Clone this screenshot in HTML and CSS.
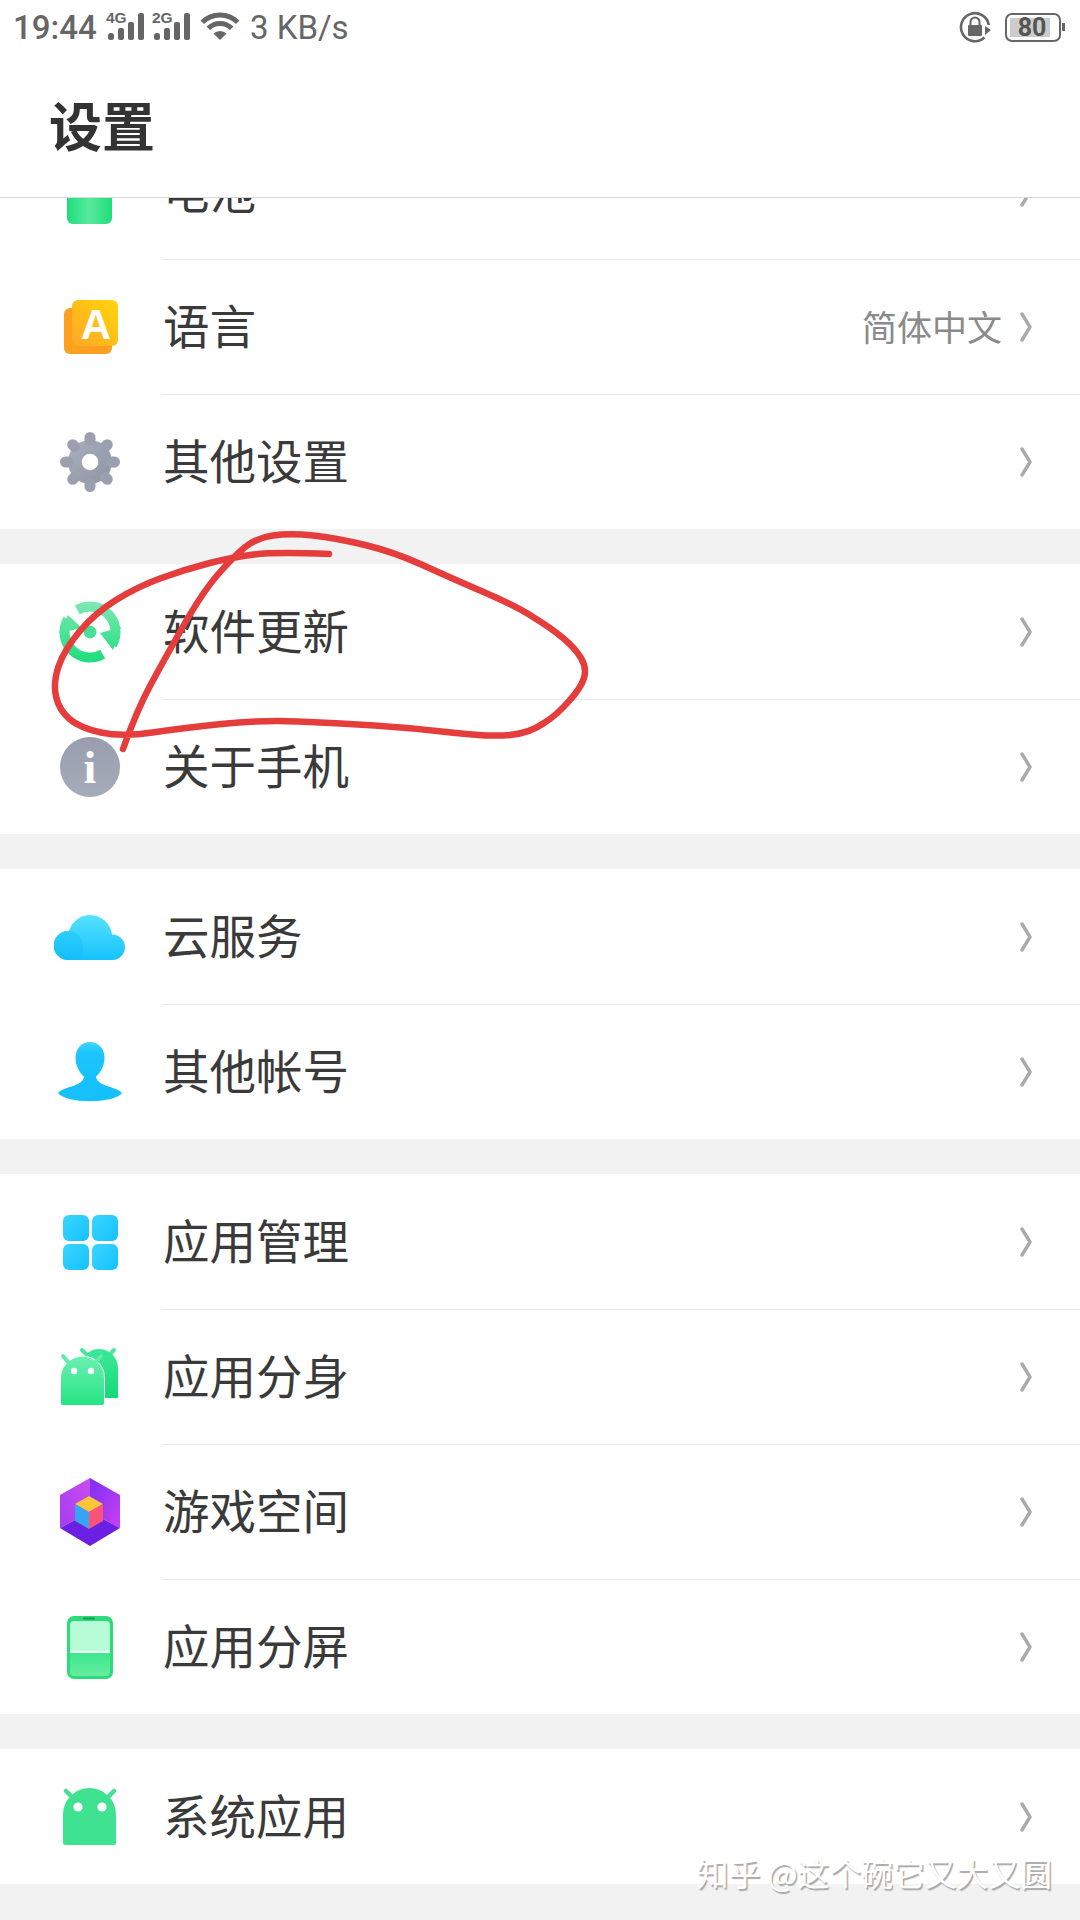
FILE: index.html
```html
<!DOCTYPE html>
<html lang="zh-CN">
<head>
    <meta charset="UTF-8">
    <meta name="viewport" content="width=device-width, initial-scale=1">
    <link rel="stylesheet" href="styles.css">
</head>
<body>

<div class="screen">

    <div class="status-bar">
        <span class="clock">19:44</span>
        <svg class="signal" viewBox="0 0 40 40">
            <text x="0" y="16" class="signal-type">4G</text>
            <rect x="2" y="26" width="6" height="7" rx="2.5"/>
            <rect x="12" y="21" width="6" height="12" rx="2"/>
            <rect x="22" y="15" width="6" height="18" rx="2"/>
            <rect x="32" y="6" width="6" height="27" rx="2"/>
        </svg>
        <svg class="signal" viewBox="0 0 40 40">
            <text x="0" y="16" class="signal-type">2G</text>
            <rect x="2" y="26" width="6" height="7" rx="2.5"/>
            <rect x="12" y="21" width="6" height="12" rx="2"/>
            <rect x="22" y="15" width="6" height="18" rx="2"/>
            <rect x="32" y="6" width="6" height="27" rx="2"/>
        </svg>
        <svg class="wifi" viewBox="0 0 40 30">
            <path d="M2.3 10.3 A25 25 0 0 1 37.7 10.3" fill="none" stroke="#666" stroke-width="5"/>
            <path d="M8.3 16.3 A16.5 16.5 0 0 1 31.7 16.3" fill="none" stroke="#666" stroke-width="5"/>
            <path d="M20 28 L13.5 21.5 A9.5 9.5 0 0 1 26.5 21.5 Z" fill="#666"/>
        </svg>
        <span class="net-speed">3 KB/s</span>
        <span class="status-spacer"></span>
        <svg class="rotate-lock" viewBox="0 0 32 32">
            <path d="M25.5 26.5 A14 14 0 1 1 29.8 14" fill="none" stroke="#666" stroke-width="2.6"/>
            <path d="M26 15 L32 19 L26 24 Z" fill="#666"/>
            <rect x="9" y="14" width="14" height="11" rx="1" fill="#666"/>
            <path d="M11.5 14 V11 A4.5 4.5 0 0 1 20.5 11 V14" fill="none" stroke="#666" stroke-width="2"/>
        </svg>
        <div class="battery">
            <div class="battery-body"><span class="battery-level">80</span></div>
            <div class="battery-nub"></div>
        </div>
    </div>

    <div class="page-header">
        <h1 class="page-title">设置</h1>
    </div>

    <div class="settings-list">

        <div class="group">
            <div class="row">
                <svg class="row-icon" viewBox="0 0 72 72">
                    <defs><linearGradient id="battG" x1="0" x2="1" y1="0" y2="0"><stop offset="0" stop-color="#1edd7c"/><stop offset=".5" stop-color="#58ea9d"/><stop offset="1" stop-color="#1edd7c"/></linearGradient></defs>
                    <rect x="13" y="5" width="45" height="63" rx="6" fill="url(#battG)"/>
                </svg>
                <span class="row-label">电池</span>
                <svg class="chevron" viewBox="0 0 12 30"><path d="M2 2 L10 15 L2 28"/></svg>
            </div>
            <div class="row">
                <svg class="row-icon" viewBox="0 0 72 72">
                    <defs><linearGradient id="langG" x1="1" x2="0" y1="0" y2="1"><stop offset="0" stop-color="#ffd60a"/><stop offset="1" stop-color="#ffa726"/></linearGradient></defs>
                    <rect x="10" y="17" width="48" height="46" rx="6" fill="#ff9f1f"/>
                    <rect x="18" y="9" width="46" height="46" rx="6" fill="url(#langG)"/>
                    <text x="42" y="48" class="lang-letter">A</text>
                </svg>
                <span class="row-label">语言</span>
                <span class="row-value">简体中文</span>
                <svg class="chevron" viewBox="0 0 12 30"><path d="M2 2 L10 15 L2 28"/></svg>
            </div>
            <div class="row">
                <svg class="row-icon" viewBox="0 0 72 72">
                    <defs><linearGradient id="gearG" x1="0" x2="1" y1="0" y2="1"><stop offset="0" stop-color="#aab0bd"/><stop offset="1" stop-color="#8d93a3"/></linearGradient></defs>
                    <circle cx="36" cy="36" r="22" fill="url(#gearG)"/>
                    <g stroke="#9aa0af" stroke-width="11" stroke-linecap="round">
                        <path d="M36 14 V11.5"/>
                        <path d="M36 58 V60.5"/>
                        <path d="M14 36 H11.5"/>
                        <path d="M58 36 H60.5"/>
                        <path d="M20.5 20.5 L18.7 18.7"/>
                        <path d="M51.5 20.5 L53.3 18.7"/>
                        <path d="M20.5 51.5 L18.7 53.3"/>
                        <path d="M51.5 51.5 L53.3 53.3"/>
                    </g>
                    <circle cx="36" cy="36" r="8.3" fill="#fff"/>
                </svg>
                <span class="row-label">其他设置</span>
                <svg class="chevron" viewBox="0 0 12 30"><path d="M2 2 L10 15 L2 28"/></svg>
            </div>
        </div>

        <div class="group">
            <div class="row">
                <svg class="row-icon" viewBox="0 0 72 72">
                    <defs><linearGradient id="updG" gradientUnits="userSpaceOnUse" x1="0" x2="0" y1="6" y2="66"><stop offset="0" stop-color="#7ce9b2"/><stop offset="1" stop-color="#1edd7c"/></linearGradient></defs>
                    <path d="M23.25 13.9 A25.5 25.5 0 0 1 58.1 48.75" fill="none" stroke="url(#updG)" stroke-width="10"/>
                    <path d="M48.75 58.1 A25.5 25.5 0 0 1 13.9 23.25" fill="none" stroke="url(#updG)" stroke-width="10"/>
                    <polygon points="67,31 46,37 59,54" fill="url(#updG)"/>
                    <polygon points="5,37 28,32 14,19" fill="url(#updG)"/>
                    <circle cx="36" cy="36" r="6.5" fill="#45e097"/>
                </svg>
                <span class="row-label">软件更新</span>
                <svg class="chevron" viewBox="0 0 12 30"><path d="M2 2 L10 15 L2 28"/></svg>
            </div>
            <div class="row">
                <svg class="row-icon" viewBox="0 0 72 72">
                    <defs><linearGradient id="infoG" x1="0" x2="0" y1="0" y2="1"><stop offset="0" stop-color="#989eae"/><stop offset="1" stop-color="#a6abb9"/></linearGradient></defs>
                    <circle cx="36" cy="36" r="30" fill="url(#infoG)"/>
                    <text x="36" y="52" class="info-letter">i</text>
                </svg>
                <span class="row-label">关于手机</span>
                <svg class="chevron" viewBox="0 0 12 30"><path d="M2 2 L10 15 L2 28"/></svg>
            </div>
        </div>

        <div class="group">
            <div class="row">
                <svg class="row-icon" viewBox="0 0 72 72">
                    <defs>
                        <linearGradient id="cloudG" x1="0" x2="0" y1="0" y2="1"><stop offset="0" stop-color="#55e2ff"/><stop offset="1" stop-color="#16c2fd"/></linearGradient>
                        <linearGradient id="cloudL" x1="0" x2="0" y1="0" y2="1"><stop offset="0" stop-color="#2ccdfd"/><stop offset="1" stop-color="#14bffc"/></linearGradient>
                    </defs>
                    <path d="M14 59 A14.5 14.5 0 0 1 14 30 H15 A22 22 0 0 1 58 33.5 A12.7 12.7 0 0 1 58.5 59 Z" fill="url(#cloudG)"/>
                    <path d="M14.5 59 A14.5 14.5 0 1 1 29 44.5 V59 Z" fill="url(#cloudL)"/>
                </svg>
                <span class="row-label">云服务</span>
                <svg class="chevron" viewBox="0 0 12 30"><path d="M2 2 L10 15 L2 28"/></svg>
            </div>
            <div class="row">
                <svg class="row-icon" viewBox="0 0 72 72">
                    <defs><linearGradient id="userG" x1="0" x2="0" y1="0" y2="1"><stop offset="0" stop-color="#3fd6ff"/><stop offset=".3" stop-color="#1cc5fd"/><stop offset="1" stop-color="#16c0fb"/></linearGradient></defs>
                    <path d="M4 57 C10 50 28 51 30 41 L42 41 C44 51 62 50 68 57 C60 68 12 68 4 57 Z" fill="#16c0fb"/>
                    <path d="M36 6 C45 6 50.5 13 50.5 22 C50.5 32 43 43 36 43 C29 43 21.5 32 21.5 22 C21.5 13 27 6 36 6 Z" fill="url(#userG)"/>
                </svg>
                <span class="row-label">其他帐号</span>
                <svg class="chevron" viewBox="0 0 12 30"><path d="M2 2 L10 15 L2 28"/></svg>
            </div>
        </div>

        <div class="group">
            <div class="row">
                <svg class="row-icon" viewBox="0 0 72 72">
                    <defs><linearGradient id="appsG" x1="0" x2="1" y1="0" y2="1"><stop offset="0" stop-color="#3cd5ff"/><stop offset="1" stop-color="#14c2ff"/></linearGradient></defs>
                    <rect x="9" y="9" width="26" height="26" rx="6" fill="url(#appsG)"/>
                    <rect x="38" y="9" width="26" height="26" rx="6" fill="url(#appsG)"/>
                    <rect x="9" y="38" width="26" height="26" rx="6" fill="url(#appsG)"/>
                    <rect x="38" y="38" width="26" height="26" rx="6" fill="url(#appsG)"/>
                </svg>
                <span class="row-label">应用管理</span>
                <svg class="chevron" viewBox="0 0 12 30"><path d="M2 2 L10 15 L2 28"/></svg>
            </div>
            <div class="row">
                <svg class="row-icon" viewBox="0 0 72 72">
                    <defs>
                        <linearGradient id="droidBack" x1="0" x2="0" y1="0" y2="1"><stop offset="0" stop-color="#3ee79a"/><stop offset="1" stop-color="#12dc74"/></linearGradient>
                        <linearGradient id="droidFront" x1="0" x2="0" y1="0" y2="1"><stop offset="0" stop-color="#6cefb0"/><stop offset="1" stop-color="#26e484"/></linearGradient>
                    </defs>
                    <path d="M28 9 L32 13 M60 9 L56 13" stroke="#4ae89f" stroke-width="4" stroke-linecap="round"/>
                    <path d="M26 57 V27 A19 19 0 0 1 64 27 V57 Z" fill="url(#droidBack)"/>
                    <path d="M8 64 Q7 64 7 62 V37 A21.5 21.5 0 0 1 50 37 V62 Q50 64 48 64 Z" fill="#fff" stroke="#fff" stroke-width="2"/>
                    <path d="M9 15 L14 21 M47 15 L42 21" stroke="#5fecaa" stroke-width="4" stroke-linecap="round"/>
                    <path d="M9 64 Q7 64 7 62 V37 A21.5 21.5 0 0 1 50 37 V62 Q50 64 48 64 Z" fill="url(#droidFront)"/>
                    <circle cx="20" cy="30" r="3.2" fill="#fff"/>
                    <circle cx="37" cy="30" r="3.2" fill="#fff"/>
                </svg>
                <span class="row-label">应用分身</span>
                <svg class="chevron" viewBox="0 0 12 30"><path d="M2 2 L10 15 L2 28"/></svg>
            </div>
            <div class="row">
                <svg class="row-icon" viewBox="0 0 72 72">
                    <defs>
                        <linearGradient id="hexL" x1="1" x2="0" y1="0" y2="1"><stop offset="0" stop-color="#c94df2"/><stop offset="1" stop-color="#a53cf0"/></linearGradient>
                        <linearGradient id="hexR" x1="0" x2="1" y1="0" y2="1"><stop offset="0" stop-color="#7a2ff5"/><stop offset="1" stop-color="#cc3ff0"/></linearGradient>
                    </defs>
                    <polygon points="36,2 6,19 6,52 36,36" fill="url(#hexL)"/>
                    <polygon points="36,2 66,19 66,52 36,36" fill="url(#hexR)"/>
                    <polygon points="6,52 36,70 66,52 36,36" fill="#6a1fe3"/>
                    <polygon points="35,20 49,28 35,36 21,28" fill="#ffc53a"/>
                    <polygon points="21,28 35,36 35,53 21,45" fill="#36a5f5"/>
                    <polygon points="49,28 35,36 35,53 49,45" fill="#fb5478"/>
                </svg>
                <span class="row-label">游戏空间</span>
                <svg class="chevron" viewBox="0 0 12 30"><path d="M2 2 L10 15 L2 28"/></svg>
            </div>
            <div class="row">
                <svg class="row-icon" viewBox="0 0 72 72">
                    <defs><linearGradient id="splitG" x1="0" x2="0" y1="0" y2="1"><stop offset="0" stop-color="#3ce88f"/><stop offset="1" stop-color="#66ed9f"/></linearGradient></defs>
                    <rect x="13" y="5" width="46" height="63" rx="7" fill="#2cdc7a"/>
                    <path d="M16 14 Q16 10 20 10 H52 Q56 10 56 14 V40 H16 Z" fill="#b8fbd7"/>
                    <path d="M16 42 H56 V61 Q56 65 52 65 H20 Q16 65 16 61 Z" fill="url(#splitG)"/>
                    <rect x="29" y="6.5" width="12" height="2" rx="1" fill="#149a55"/>
                    <rect x="16" y="40" width="40" height="2" fill="#f1fff8"/>
                </svg>
                <span class="row-label">应用分屏</span>
                <svg class="chevron" viewBox="0 0 12 30"><path d="M2 2 L10 15 L2 28"/></svg>
            </div>
        </div>

        <div class="group">
            <div class="row">
                <svg class="row-icon" viewBox="0 0 72 72">
                    <path d="M12 10 L19 17 M60 10 L53 17" stroke="#46e095" stroke-width="4.5" stroke-linecap="round"/>
                    <path d="M11 64 Q9 64 9 62 V33.5 A26.5 26.5 0 0 1 62 33.5 V62 Q62 64 60 64 Z" fill="#3fe290"/>
                    <circle cx="24" cy="26" r="4.6" fill="#fff"/>
                    <circle cx="48" cy="26" r="4.6" fill="#fff"/>
                </svg>
                <span class="row-label">系统应用</span>
                <svg class="chevron" viewBox="0 0 12 30"><path d="M2 2 L10 15 L2 28"/></svg>
            </div>
        </div>

    </div>

    <!-- hand drawn circle on top of the screenshot -->
    <svg class="scribble" viewBox="0 0 1080 1920">
        <path d="M329 554 Q275 552 254 554.5 Q233 557 208 563.5 Q183 570 160 578.5 Q137 587 116 600 Q95 613 79.5 631.5 Q64 650 58.5 666.5 Q53 683 56 696.5 Q59 710 69.5 719 Q80 728 101 732.5 Q122 737 152.5 732.5 Q183 728 221.5 724 Q260 720 298 721.5 Q336 723 374.5 725.5 Q413 728 451 732.5 Q489 737 510 735 Q530 733 544 723 Q557 715 569 701 Q581 688 584 678 Q587 668 581 658 Q575 648 563 638 Q551 628 533 617 Q516 606 483.5 592 Q451 578 422.5 565 Q394 552 365 545 Q336 538 313 535.5 Q290 533 273 535.5 Q256 538 244.5 547.5 Q233 557 217.5 575 Q202 593 183 626.5 Q164 660 150.5 685 Q137 710 123 749"/>
    </svg>

    <div class="watermark">知乎 @这个碗它又大又圆</div>

</div>

</body>
</html>
```

FILE: styles.css
```css
* {
    box-sizing: border-box;
}

body {
    margin: 0;
    background-color: #f2f2f2;
    font-family: "Noto Sans CJK SC", "Noto Sans", sans-serif;
    color: #333;
}

.screen {
    position: relative;
    width: 1080px;
    height: 1920px;
    overflow: hidden;
}

/* status bar */
.status-bar {
    position: relative;
    z-index: 2;
    display: flex;
    align-items: center;
    height: 54px;
    padding: 0 15px 0 13px;
    background-color: #fff;
    color: #666;
    font-family: Roboto, sans-serif;
}

.clock {
    width: 93px;
    font-size: 33px;
    font-weight: 500;
    white-space: nowrap;
}

.signal {
    width: 40px;
    height: 40px;
    margin-right: 6px;
    fill: #666;
}

.signal-type {
    font-family: "Liberation Sans", sans-serif;
    font-size: 15.5px;
    font-weight: 700;
}

.wifi {
    width: 40px;
    height: 30px;
    margin-left: 2px;
}

.net-speed {
    margin-left: 10px;
    font-size: 33px;
}

.status-spacer {
    flex: 1;
}

.rotate-lock {
    width: 32px;
    height: 32px;
    margin-right: 14px;
}

.battery {
    display: flex;
    align-items: center;
}

.battery-body {
    width: 56px;
    height: 29px;
    padding: 3px;
    border: 2.5px solid #666;
    border-radius: 7px;
}

.battery-level {
    display: block;
    width: 40px;
    height: 100%;
    padding-left: 4px;
    background-color: #ccc;
    font-size: 25px;
    font-weight: 700;
    line-height: 19px;
    text-align: center;
    color: #555;
}

.battery-nub {
    width: 3px;
    height: 8px;
    margin-left: 1px;
    background-color: #666;
}

/* header */
.page-header {
    position: relative;
    z-index: 2;
    display: flex;
    align-items: center;
    height: 144px;
    padding: 0 0 2px 49px;
    background-color: #fff;
    border-bottom: 1px solid #d8d8d8;
}

.page-title {
    margin: 0;
    font-size: 53px;
    font-weight: 700;
    line-height: 1;
    color: #333;
}

/* list, scrolled up a bit so the first row is cut by the header */
.settings-list {
    margin-top: -74px;
}

.group {
    margin-bottom: 35px;
    background-color: #fff;
}

.row {
    position: relative;
    display: flex;
    align-items: center;
    height: 135px;
    padding-right: 48px;
}

.row + .row::before {
    content: "";
    position: absolute;
    left: 162px;
    right: 0;
    top: 0;
    height: 1px;
    background-color: #e8e8e8;
}

.row-icon {
    flex: none;
    width: 72px;
    height: 72px;
    margin: 0 37px 0 54px;
}

.row-label {
    flex: 1;
    padding-bottom: 5px;
    font-size: 46.5px;
    line-height: 1;
    color: #3a3a3a;
}

.row-value {
    margin-right: 18px;
    padding-bottom: 3px;
    font-size: 35px;
    line-height: 1;
    color: #8a8a8a;
}

.chevron {
    flex: none;
    width: 12px;
    height: 30px;
    fill: none;
    stroke: #aaa;
    stroke-width: 3.4;
    stroke-linecap: round;
    stroke-linejoin: round;
}

.lang-letter {
    font-family: "Liberation Sans", sans-serif;
    font-size: 42px;
    font-weight: 700;
    fill: #fff;
    text-anchor: middle;
}

.info-letter {
    font-family: "Liberation Serif", serif;
    font-size: 46px;
    font-weight: 700;
    fill: #fff;
    text-anchor: middle;
}

/* overlays */
.scribble {
    position: absolute;
    z-index: 3;
    top: 0;
    left: 0;
    width: 1080px;
    height: 1920px;
    fill: none;
    stroke: #e53c3c;
    stroke-width: 6.5;
    stroke-linecap: round;
    stroke-linejoin: round;
}

.watermark {
    position: absolute;
    z-index: 3;
    right: 28px;
    bottom: 31px;
    font-size: 31.8px;
    line-height: 1;
    color: #fff;
    white-space: pre;
    text-shadow: 1.5px 1.5px 1px #a8a8a8;
}
```
